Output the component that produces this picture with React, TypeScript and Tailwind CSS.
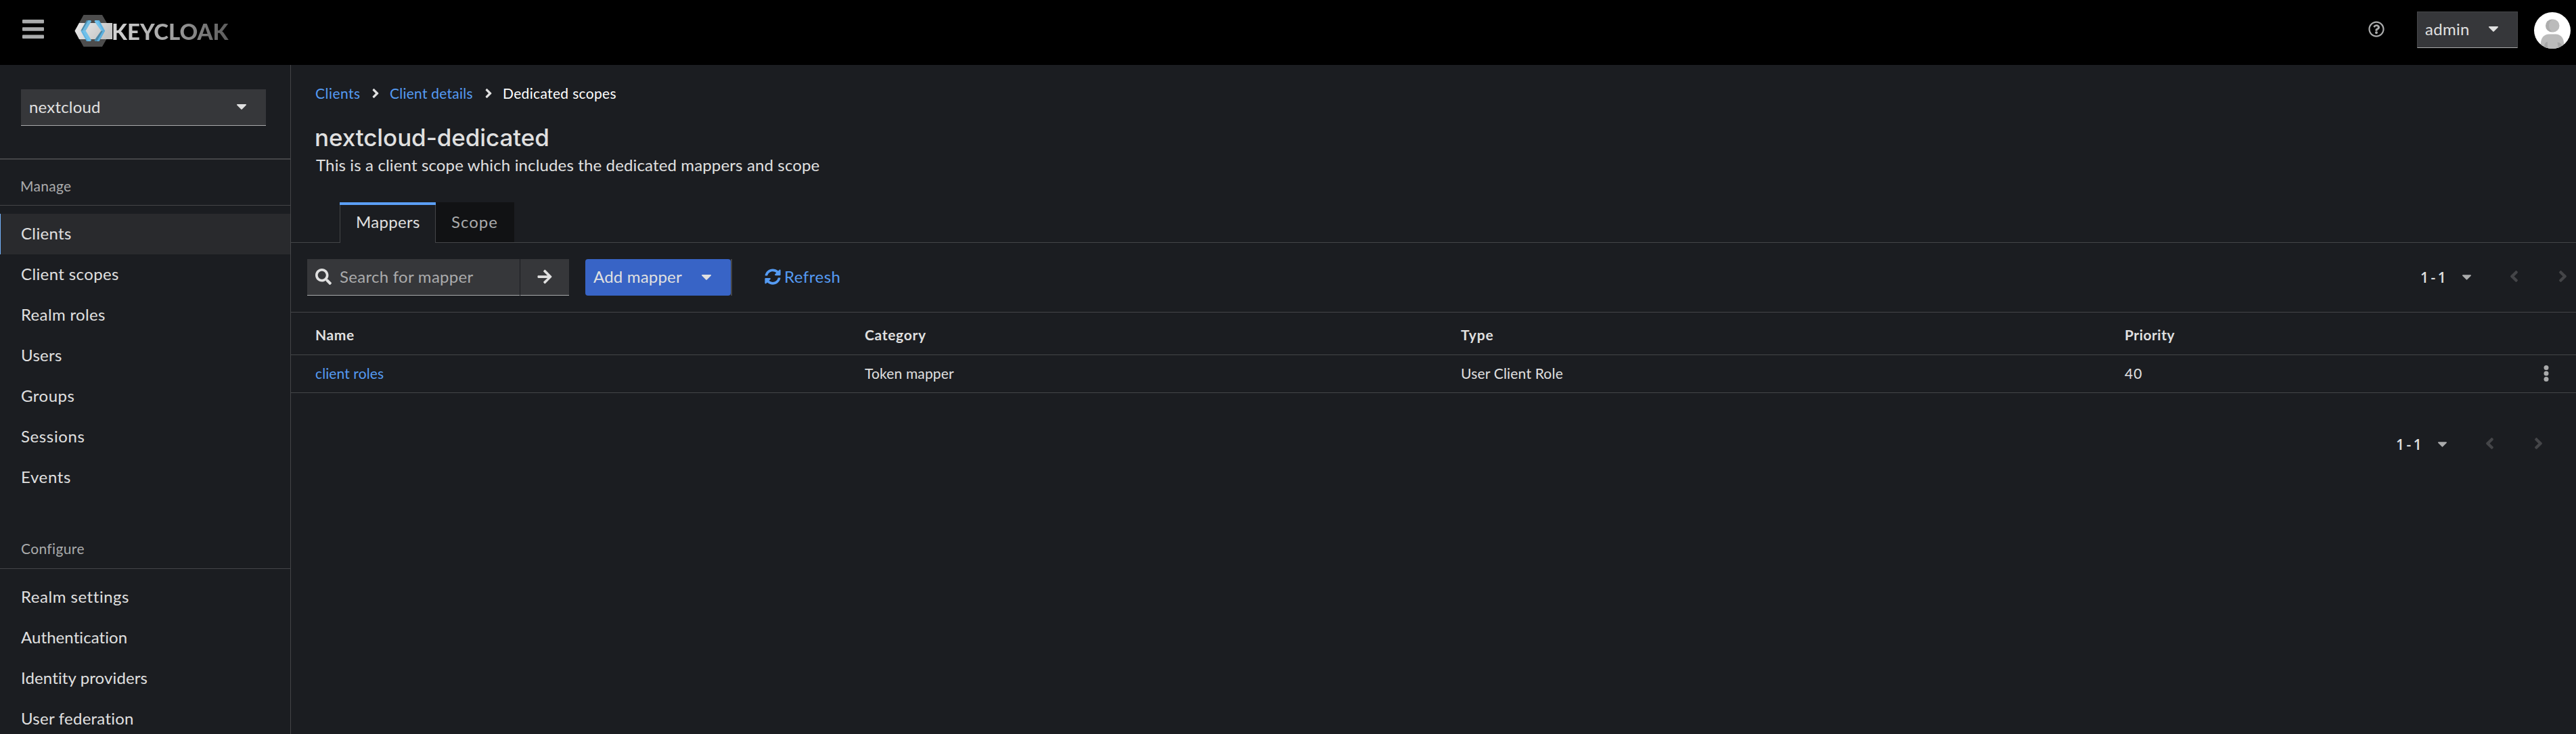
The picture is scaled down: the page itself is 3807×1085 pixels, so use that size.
import type { ReactNode } from 'react'
import {
  FaAngleLeft,
  FaAngleRight,
  FaArrowRight,
  FaRegQuestionCircle,
  FaSearch,
  FaSyncAlt,
} from 'react-icons/fa'

type NavEntry = { label: string; tracking: string; active?: boolean }

const manageItems: NavEntry[] = [
  { label: 'Clients', tracking: 'tracking-[0.34px]', active: true },
  { label: 'Client scopes', tracking: 'tracking-[0.38px]' },
  { label: 'Realm roles', tracking: 'tracking-[0.34px]' },
  { label: 'Users', tracking: 'tracking-[0.3px]' },
  { label: 'Groups', tracking: 'tracking-[0.5px]' },
  { label: 'Sessions', tracking: 'tracking-[0.62px]' },
  { label: 'Events', tracking: 'tracking-[0.63px]' },
]

const configureItems: NavEntry[] = [
  { label: 'Realm settings', tracking: 'tracking-[0.53px]' },
  { label: 'Authentication', tracking: 'tracking-[0.07px]' },
  { label: 'Identity providers', tracking: 'tracking-[0.12px]' },
  { label: 'User federation', tracking: 'tracking-[0.25px]' },
]

function Caret({ className }: { className: string }) {
  return (
    <svg viewBox="0 0 14 8" className={className} fill="currentColor">
      <path d="M1 0h12c.9 0 1.3 1 .7 1.6l-6 6a1 1 0 0 1-1.4 0l-6-6C-.3 1 .1 0 1 0z" />
    </svg>
  )
}

function Logo() {
  return (
    <div className="flex h-[48px] items-center">
      <svg viewBox="0 0 56 48" className="h-[48px] w-[56px]">
        <defs>
          <linearGradient id="body" x1="0" y1="0" x2="1" y2="0.4">
            <stop offset="0" stopColor="#ececec" />
            <stop offset="0.5" stopColor="#d9d9d9" />
            <stop offset="1" stopColor="#c4c4c4" />
          </linearGradient>
        </defs>
        <path d="M13.5 0H41l13.5 23.5L41 47H13.5L.5 23.5z" fill="#4d4d4d" />
        <path d="M7 12h49v24H7L.5 23.8z" fill="url(#body)" />
        <path d="M18 8L9.300 23.500h5.200L23.500 8z" fill="#4a88a8" />
        <path d="M20.500 8h3.500l1 1.500-8.300 14h-5.200z" fill="#6cb9e0" />
        <path d="M9.300 23.500L18 39h5.500l-8.800-15.500z" fill="#5db2e2" />
        <path d="M11.500 23.500h5.200l8.300 14-1.300 1.500h-3.400z" fill="#72c1ea" />
        <path d="M36.500 8L45 23.500h-5.500L29.500 9.500 30.500 8z" fill="#72c1ea" />
        <path d="M36.500 8L45 23.500h-3L34 8z" fill="#5db2e2" />
        <path d="M36.500 39L45 23.500h-5.500L29.500 37.500l1 1.500z" fill="#4a88a8" />
        <path d="M36.500 39L45 23.500h-3L33 39z" fill="#5db2e2" />
      </svg>
      <span className="-ml-[1px] bg-linear-to-r from-[#d6d6d6] via-[#a2a2a2] to-[#5c5c5c] bg-clip-text font-[Lato,sans-serif] text-[33px] leading-[48px] font-black text-transparent">
        KEYCLOAK
      </span>
    </div>
  )
}

function Avatar() {
  return (
    <svg viewBox="0 0 54 54" className="h-[54px] w-[54px]">
      <defs>
        <clipPath id="round">
          <circle cx="27" cy="27" r="27" />
        </clipPath>
      </defs>
      <g clipPath="url(#round)">
        <rect width="54" height="54" fill="#fff" />
        <circle cx="26.5" cy="20" r="9.500" fill="#acacac" />
        <path d="M28 10.500a9.500 9.500 0 0 1 0 19c-8-3-8-16 0-19z" fill="#bbb" />
        <path d="M10 54V46c0-8 5-13.500 12-13.500h10c7 0 12 5.500 12 13.500v8z" fill="#bbb" />
        <path d="M15 50c.5-3.500 2-5.500 5-6.500V54h-5z" fill="#a6a6a6" />
        <path d="M34.500 44.500c4 .3 6 2 6.500 5.500l-5 4z" fill="#a6a6a6" />
      </g>
    </svg>
  )
}

function TopBar() {
  return (
    <header className="flex h-[96px] shrink-0 items-start bg-black">
      <svg viewBox="0 0 32 28" className="mt-[29px] ml-[33px] h-[28px] w-[32px]" fill="#aaabac">
        <rect y="0" width="32" height="5.4" rx="1" />
        <rect y="11.3" width="32" height="5.4" rx="1" />
        <rect y="22.6" width="32" height="5.4" rx="1" />
      </svg>
      <div className="mt-[22px] ml-[45px]">
        <Logo />
      </div>
      <div className="ml-auto flex">
        <FaRegQuestionCircle className="mt-[31px] h-[24px] w-[24px] text-[#aaabac]" />
        <div className="mt-[17px] ml-[48px] flex h-[54px] w-[149px] items-center justify-between border border-[#444548] border-b-[#aaabac] bg-[#36373a] pr-[28px] pb-[2px] pl-[11px]">
          <span className="tracking-[0.28px]">admin</span>
          <Caret className="h-[8px] w-[14px]" />
        </div>
        <div className="mt-[17.5px] mr-[8px] ml-[24px]">
          <Avatar />
        </div>
      </div>
    </header>
  )
}

function NavList({ items }: { items: NavEntry[] }) {
  return (
    <ul className="mt-[12px]">
      {items.map((item) => (
        <li
          key={item.label}
          className={
            item.active
              ? 'flex h-[60px] items-center border-l border-[#73b0f7] bg-[#292a2d] pb-[3px] pl-[30px]'
              : 'flex h-[60px] items-center pb-[3px] pl-[31px]'
          }
        >
          <span className={item.tracking}>{item.label}</span>
        </li>
      ))}
    </ul>
  )
}

function Sidebar() {
  return (
    <aside className="flex w-[430px] shrink-0 flex-col border-r border-[#444548]">
      <div className="h-[140px] shrink-0 border-b-2 border-[#444548] pt-[36px] pl-[31px]">
        <div className="flex h-[54px] w-[362px] items-center justify-between border-b border-[#aaabac] bg-[#36373a] pr-[29px] pb-px pl-[12px]">
          <span className="tracking-[0.19px]">nextcloud</span>
          <Caret className="h-[8px] w-[14px]" />
        </div>
      </div>
      <h2 className="h-[68px] shrink-0 border-b border-[#444548] pt-[24px] pl-[30px] text-[21px] leading-[30px] tracking-[0.29px] text-[#aaabac]">
        Manage
      </h2>
      <NavList items={manageItems} />
      <h2 className="h-[105px] shrink-0 border-b border-[#444548] pt-[60px] pl-[31px] text-[21px] leading-[30px] tracking-[0.36px] text-[#aaabac]">
        Configure
      </h2>
      <NavList items={configureItems} />
    </aside>
  )
}

function Breadcrumb() {
  return (
    <nav className="flex h-[30px] items-center pl-[36px] text-[21px] leading-[30px] text-[#559bf3]">
      <span className="w-[78px] tracking-[0.46px]">Clients</span>
      <FaAngleRight className="h-[22px] w-[22px] text-[#e0e0e0]" />
      <span className="ml-[10px] w-[135px] tracking-[0.24px]">Client details</span>
      <FaAngleRight className="h-[22px] w-[22px] text-[#e0e0e0]" />
      <span className="ml-[10px] tracking-[0.34px] text-white">Dedicated scopes</span>
    </nav>
  )
}

function Tabs() {
  return (
    <div className="flex h-[60px]">
      <div className="w-[72px] border-b border-[#444548]" />
      <div className="flex w-[142px] flex-col border-r border-l border-[#444548]">
        <div className="-mx-px h-[4px] shrink-0 bg-[#5b9ff5]" />
        <span className="pt-[7px] pl-[23px] leading-[36px] tracking-[0.32px]">Mappers</span>
      </div>
      <div className="w-[116px] border-b border-[#444548] bg-[#111214] pt-[11px] pl-[23px] leading-[36px] tracking-[1px] text-[#aaabac]">
        Scope
      </div>
      <div className="flex-1 border-b border-[#444548]" />
    </div>
  )
}

function Pagination({ className }: { className: string }) {
  return (
    <div className={className}>
      <span className="w-[62px] font-['Open_Sans',sans-serif] text-[21px] leading-[30px] font-semibold tracking-[-1px]">
        1 - 1
      </span>
      <Caret className="h-[8px] w-[13px] text-[#aaabac]" />
      <FaAngleLeft className="mb-[3px] ml-[50px] h-[27px] w-[27px] text-[#444548]" />
      <FaAngleRight className="mb-[3px] ml-[45px] h-[27px] w-[27px] text-[#444548]" />
    </div>
  )
}

function Toolbar() {
  return (
    <div className="mt-[24px] flex h-[54px] pl-[24px]">
      <div className="flex w-[314px] items-center border-b border-[#aaabac] bg-[#36373a] pl-[12px]">
        <FaSearch className="mb-px h-[24px] w-[24px]" />
        <span className="ml-[12px] pb-px tracking-[0.28px] text-[#aaabac]">Search for mapper</span>
      </div>
      <div className="ml-px flex w-[72px] items-center justify-center border-b border-[#aaabac] bg-[#36373a]">
        <FaArrowRight className="mb-px h-[24px] w-[24px]" />
      </div>
      <div className="ml-[24px] flex w-[217px] border-r-2 border-[#444548]">
        <div className="flex w-[215px] items-center justify-between rounded-[4px] bg-[#3864c6] pr-[29px] pb-[2px] pl-[12px]">
          <span className="tracking-[0.19px]">Add mapper</span>
          <Caret className="mt-[2px] h-[8px] w-[14px]" />
        </div>
      </div>
      <div className="ml-[48px] flex items-center pb-[2px] text-[#559bf3]">
        <FaSyncAlt className="h-[24px] w-[24px]" />
        <span className="ml-[5px] tracking-[0.5px]">Refresh</span>
      </div>
      <Pagination className="ml-auto flex items-center pr-[6px]" />
    </div>
  )
}

function Row({ className, children }: { className: string; children: ReactNode }) {
  return (
    <div
      className={`grid grid-cols-[812px_881px_981px_1fr_72px] items-center border-b border-[#444548] pl-[36px] text-[21px] leading-[30px] ${className}`}
    >
      {children}
    </div>
  )
}

function MapperTable() {
  return (
    <div className="mt-[24px] border-t border-[#444548]">
      <Row className="h-[63px] pt-[4px] font-bold">
        <span className="tracking-[0.6px]">Name</span>
        <span className="tracking-[0.69px]">Category</span>
        <span className="tracking-[0.9px]">Type</span>
        <span className="tracking-[0.49px]">Priority</span>
      </Row>
      <Row className="h-[56px] pb-[2px]">
        <span className="tracking-[0.11px] text-[#559bf3]">client roles</span>
        <span className="tracking-[0.15px]">Token mapper</span>
        <span className="tracking-[0.2px]">User Client Role</span>
        <span className="tracking-[1px]">40</span>
        <svg viewBox="0 0 8 24" className="ml-[24px] h-[24px] w-[8px]" fill="#aaabac">
          <circle cx="4" cy="3.6" r="3.5" />
          <circle cx="4" cy="12" r="3.5" />
          <circle cx="4" cy="20.4" r="3.5" />
        </svg>
      </Row>
    </div>
  )
}

export default function App() {
  return (
    <div className="flex h-[1085px] w-full flex-col overflow-hidden bg-[#1b1d21] font-[Lato,sans-serif] text-[24px] leading-[36px] text-[#e0e0e0]">
      <TopBar />
      <div className="flex min-h-0 flex-1">
        <Sidebar />
        <main className="flex min-w-0 flex-1 flex-col pt-[27px]">
          <Breadcrumb />
          <h1 className="mt-[27px] pl-[35px] font-[Inter,sans-serif] text-[35px] leading-[46px] font-medium tracking-[-0.08px]">
            nextcloud-dedicated
          </h1>
          <p className="mb-[37px] pl-[37px] tracking-[0.14px]">
            This is a client scope which includes the dedicated mappers and scope
          </p>
          <Tabs />
          <Toolbar />
          <MapperTable />
          <Pagination className="mt-[61px] flex h-[30px] items-center justify-end pr-[42px]" />
        </main>
      </div>
    </div>
  )
}
